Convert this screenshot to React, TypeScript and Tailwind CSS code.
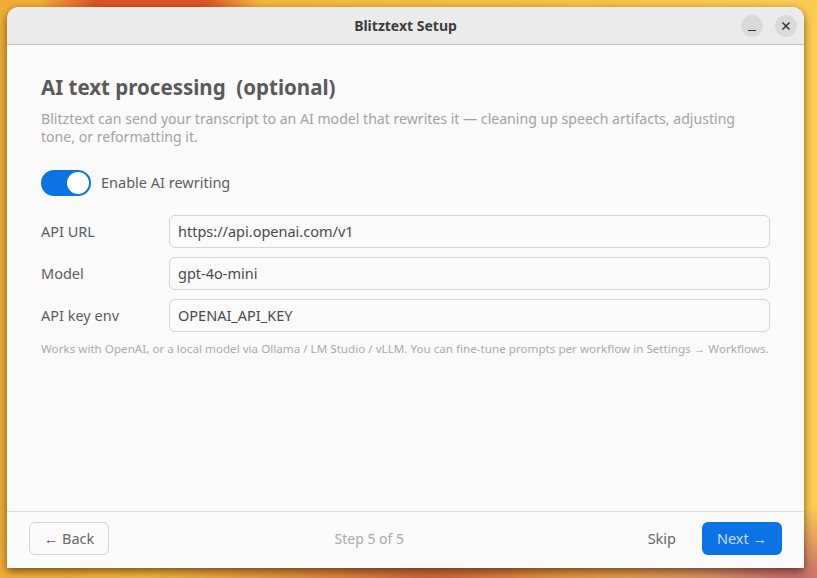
import React from "react";

const font = { fontFamily: "'Noto Sans', 'Open Sans', sans-serif" };

function Field({ label, value }: { label: string; value: string }) {
  return (
    <div className="flex items-center">
      <div className="w-[128px] text-[14.5px] text-[#5e5e5e]">{label}</div>
      <div className="flex h-[33px] flex-1 items-center rounded-[6px] border border-[#d4d4d4] bg-[#fafafa] px-[8px] text-[14.5px] text-[#4a4a4a]">
        {value}
      </div>
    </div>
  );
}

export default function App() {
  return (
    <div
      className="h-[578px] w-[817px] overflow-hidden pl-[7px] pt-[7px]"
      style={{
        ...font,
        background:
          "radial-gradient(ellipse 110px 40px at 150px 0px, #dc5426 0%, #dc5426 50%, rgba(220,84,38,0) 100%), radial-gradient(ellipse 280px 50px at 430px 578px, #d0643a 0%, rgba(208,100,58,0) 100%), radial-gradient(ellipse 220px 70px at 790px 578px, #c66a6c 0%, rgba(198,106,108,0) 100%), linear-gradient(90deg, #f2ac36 0%, #f6bd42 50%, #fbcb52 100%)",
      }}
    >
      <div className="flex h-[561px] w-[797px] flex-col overflow-hidden rounded-t-[12px] bg-[#fafafa] shadow-[0_3px_8px_rgba(0,0,0,0.55)]">
        {/* title bar */}
        <div className="relative flex h-[38px] items-center justify-center border-b border-[#c4c4c4] bg-[#ebebeb]">
          <span className="text-[14px] font-bold text-[#3d3d3d]">Blitztext Setup</span>
          <div className="absolute right-[7px] top-[8px] flex gap-[12px]">
            <div className="flex h-[22px] w-[22px] items-end justify-center rounded-full bg-[#dadada] pb-[6px]">
              <div className="h-[1.5px] w-[8px] bg-[#333]" />
            </div>
            <div className="flex h-[22px] w-[22px] items-center justify-center rounded-full bg-[#dadada]">
              <svg width="10" height="10" viewBox="0 0 10 10">
                <path d="M1.5 1.5 L8.5 8.5 M8.5 1.5 L1.5 8.5" stroke="#333" strokeWidth="1.5" />
              </svg>
            </div>
          </div>
        </div>

        {/* body */}
        <div className="flex flex-1 flex-col px-[34px] pt-[27px]">
          <h1 className="text-[20.5px] font-bold leading-[30px] text-[#5a5a5a]">AI text processing&nbsp; (optional)</h1>
          <p className="mt-[8px] text-[14.1px] leading-[18px] text-[#a3a3a3]">
            Blitztext can send your transcript to an AI model that rewrites it — cleaning up speech artifacts, adjusting
            tone, or reformatting it.
          </p>

          <div className="mt-[24px] flex items-center gap-[10px]">
            <div className="flex h-[26px] w-[50px] items-center justify-end rounded-full bg-[#0b73e2] pr-[2px]">
              <div className="h-[22px] w-[22px] rounded-full bg-white" />
            </div>
            <span className="text-[14.5px] text-[#5e5e5e]">Enable AI rewriting</span>
          </div>

          <div className="mt-[19px] flex flex-col gap-[9px]">
            <Field label="API URL" value="https://api.openai.com/v1" />
            <Field label="Model" value="gpt-4o-mini" />
            <Field label="API key env" value="OPENAI_API_KEY" />
          </div>

          <p className="mt-[8px] whitespace-nowrap text-[11.65px] text-[#ababab]">
            Works with OpenAI, or a local model via Ollama / LM Studio / vLLM. You can fine-tune prompts per workflow in Settings → Workflows.
          </p>
        </div>

        {/* footer */}
        <div className="flex h-[57px] items-start border-t border-[#dedede] px-[22px] pt-[10px]">
          <button className="h-[33px] w-[80px] rounded-[6px] border border-[#d4d4d4] text-[14.5px] text-[#666]">← Back</button>
          <div className="flex h-[33px] flex-1 items-center justify-center pr-[18px] text-[14px] text-[#ababab]">Step 5 of 5</div>
          <button className="mr-[26px] h-[33px] text-[14.5px] text-[#666]">Skip</button>
          <button className="h-[33px] w-[80px] rounded-[6px] bg-[#0b73e6] text-[14.5px] text-[#c6defa]">Next →</button>
        </div>
      </div>
    </div>
  );
}
